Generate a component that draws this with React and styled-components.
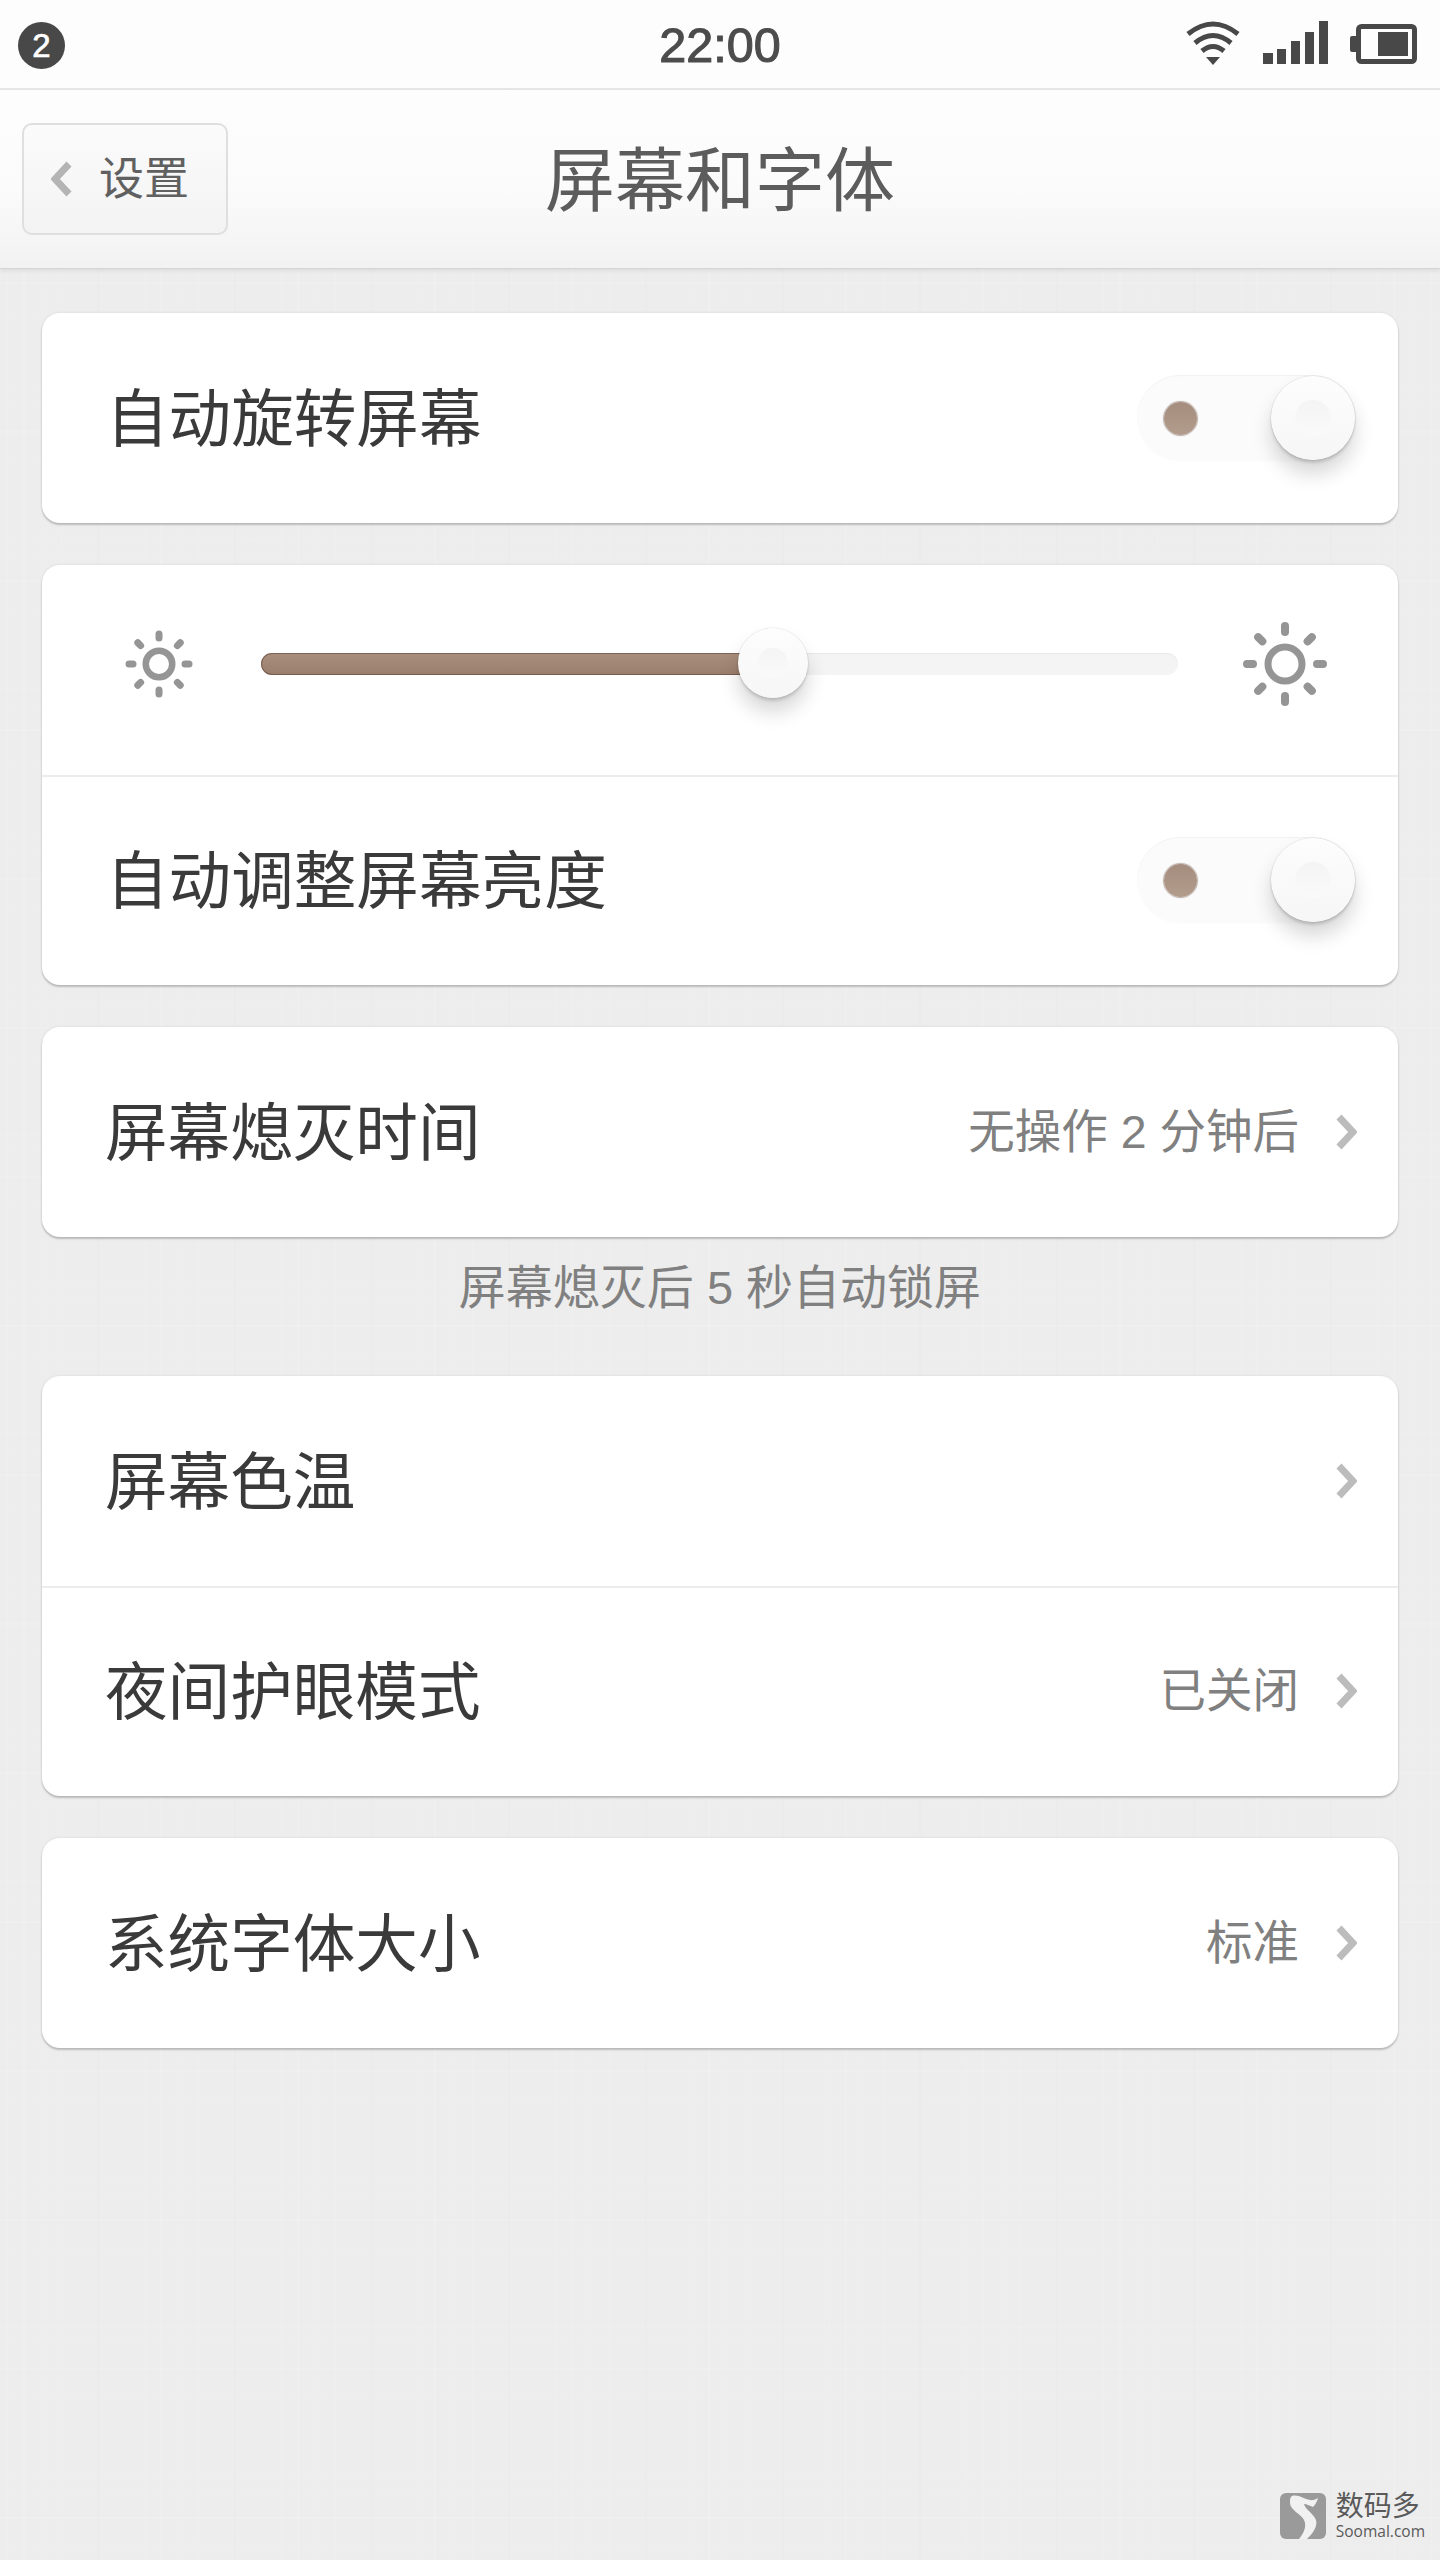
import React from "react";
import styled, { createGlobalStyle } from "styled-components";

const Global = createGlobalStyle`
  html, body { margin: 0; padding: 0; background: #ededed; }
  * { box-sizing: border-box; }
`;

const FONT = `"Liberation Sans", "Noto Sans CJK SC", sans-serif`;

const Page = styled.div`
  position: relative;
  width: 1440px;
  height: 2560px;
  overflow: hidden;
  font-family: ${FONT};
  background-color: #ededed;
  background-image:
    repeating-linear-gradient(90deg, transparent 0 7px, rgba(255,255,255,.1) 7px 8px, transparent 8px 23px, rgba(255,255,255,.12) 23px 25px, transparent 25px 41px, rgba(255,255,255,.08) 41px 42px, transparent 42px 61px, rgba(255,255,255,.1) 61px 62px, transparent 62px 97px, rgba(0,0,0,.006) 97px 99px, transparent 99px 137px),
    repeating-linear-gradient(0deg, transparent 0 11px, rgba(255,255,255,.08) 11px 12px, transparent 12px 41px, rgba(255,255,255,.1) 41px 43px, transparent 43px 67px, rgba(255,255,255,.07) 67px 68px, transparent 68px 83px, rgba(255,255,255,.09) 83px 84px, transparent 84px 149px);
`;

const StatusBar = styled.div`
  display: grid;
  grid-template-columns: 1fr auto 1fr;
  align-items: center;
  height: 90px;
  padding-top: 2px;
  background: #fdfdfd;
  border-bottom: 2px solid #e6e6e6;
`;

const Badge = styled.div`
  display: flex;
  align-items: center;
  justify-content: center;
  width: 47px;
  height: 47px;
  margin-left: 18px;
  border-radius: 50%;
  background: #484848;
  color: #fff;
  font-size: 33px;
  line-height: 1;
  -webkit-text-stroke: 0.7px #fff;
`;

const Clock = styled.div`
  font-size: 48.5px;
  line-height: 1;
  color: #4c4c4c;
  -webkit-text-stroke: 1.1px #4c4c4c;
`;

const StatusIcons = styled.svg`
  justify-self: end;
  display: block;
  margin-top: -2px;
`;

const NavBar = styled.div`
  position: relative;
  display: grid;
  grid-template-columns: 1fr auto 1fr;
  align-items: center;
  height: 179px;
  background: linear-gradient(#fdfdfd 0%, #fbfbfb 55%, #f2f2f2 100%);
  border-bottom: 1px solid #d4d4d4;
  box-shadow: 0 2px 4px rgba(0,0,0,.07);
`;

const BackButton = styled.div`
  display: flex;
  align-items: center;
  justify-self: start;
  width: 206px;
  height: 112px;
  margin-left: 22px;
  padding-left: 27px;
  gap: 26px;
  border: 2px solid #dfdfdf;
  border-radius: 10px;
  background: linear-gradient(#fbfbfb, #f3f3f3);
  color: #606060;
  font-size: 45px;
  line-height: 1;
`;

const Title = styled.div`
  padding-top: 5px;
  font-size: 70px;
  line-height: 1;
  color: #5c5c5c;
`;

const Content = styled.div`
  display: flex;
  flex-direction: column;
  padding: 44px 42px 0;
`;

const Card = styled.div`
  background: #fff;
  border-radius: 18px;
  box-shadow: 0 2px 2px rgba(0,0,0,.2), 0 0 3px rgba(0,0,0,.09);
  margin-bottom: ${p => (p.$tight ? 0 : 42)}px;
`;

const Row = styled.div`
  display: flex;
  align-items: center;
  height: 210px;
  padding-left: ${p => (p.$inset ? 64 : 63)}px;
  padding-right: ${p => (p.$toggle ? 42 : 41)}px;
  box-shadow: ${p => (p.$divided ? "inset 0 2px 0 #ececec" : "none")};
`;

const Label = styled.div`
  flex: 1;
  padding-top: 3px;
  font-size: 62.6px;
  line-height: 1;
  color: #3a3a3a;
`;

const Value = styled.div`
  margin-right: 36px;
  font-size: 46.5px;
  line-height: 1;
  color: #808080;
`;

const Caption = styled.div`
  height: 139px;
  padding-top: 27px;
  text-align: center;
  font-size: 47px;
  line-height: 48px;
  color: #808080;
`;

const Switch = styled.div`
  position: relative;
  width: 219px;
  height: 86px;
  border-radius: 43px;
  background: #fbfbfb;
  box-shadow: inset 0 1px 1px rgba(0,0,0,.04), 0 1px 1px rgba(0,0,0,.01);
`;

const SwitchDot = styled.div`
  position: absolute;
  left: 27px;
  top: 27px;
  width: 33px;
  height: 33px;
  border-radius: 50%;
  background: linear-gradient(#a58d7e, #b29c8c);
  box-shadow: 0 0 1px 1px rgba(110,85,70,.45);
`;

const Knob = styled.div`
  position: absolute;
  display: flex;
  align-items: center;
  justify-content: center;
  width: ${p => p.$size}px;
  height: ${p => p.$size}px;
  border-radius: 50%;
  background: linear-gradient(#fdfdfd, #f6f6f6);
  box-shadow: 0 0 1px rgba(0,0,0,.35), 0 3px 3px rgba(0,0,0,.13), 0 14px 20px rgba(0,0,0,.16);
`;

const SwitchKnob = styled(Knob)`
  right: 1px;
  top: 1px;
`;

const KnobCore = styled.div`
  width: ${p => p.$size}px;
  height: ${p => p.$size}px;
  border-radius: 50%;
  background: linear-gradient(#f4f4f4, #fafafa);
`;

const SliderRow = styled.div`
  display: flex;
  align-items: center;
  height: 210px;
  padding: 0 70px 12px 83px;
`;

const Track = styled.div`
  position: relative;
  width: 917px;
  height: 22px;
  margin: 0 64px 0 68px;
  border-radius: 11px;
  background: #f4f4f4;
  box-shadow: inset 0 1px 1px rgba(0,0,0,.05);
`;

const TrackFill = styled.div`
  height: 100%;
  border-radius: 11px 0 0 11px;
  background: linear-gradient(#a98e7e, #9a7e6d);
  box-shadow: inset 0 0 0 1px rgba(90,65,50,.55);
`;

const SliderKnob = styled(Knob)`
  top: -25px;
  left: 477px;
`;

const Watermark = styled.div`
  position: absolute;
  right: 15px;
  bottom: 21px;
  display: flex;
  align-items: center;
  gap: 10px;
  color: #5a5a5a;
`;

const MarkText = styled.div`
  display: flex;
  flex-direction: column;
`;

const MarkCn = styled.div`
  font-size: 28px;
  line-height: 30px;
`;

const MarkEn = styled.div`
  font-family: "Open Sans", sans-serif;
  font-size: 15.5px;
  line-height: 16px;
  margin-top: 1px;
`;

const Sun = ({ size, ring, stroke, inner, outer, rw, color = "#959595" }) => {
  const c = size / 2;
  const angles = [0, 45, 90, 135, 180, 225, 270, 315];
  return (
    <svg width={size} height={size} viewBox={`0 0 ${size} ${size}`} style={{ flex: "none" }}>
      <circle cx={c} cy={c} r={ring} fill="none" stroke={color} strokeWidth={stroke} />
      {angles.map(a => (
        <line
          key={a}
          x1={c}
          y1={c - inner}
          x2={c}
          y2={c - outer}
          stroke={color}
          strokeWidth={rw}
          strokeLinecap="round"
          transform={`rotate(${a} ${c} ${c})`}
        />
      ))}
    </svg>
  );
};

const ChevronRight = () => (
  <svg width="22" height="36" viewBox="0 0 22 36" style={{ flex: "none" }}>
    <path d="M4 3 L18 18 L4 33" fill="none" stroke="#bcbcbc" strokeWidth="7" strokeLinejoin="miter" />
  </svg>
);

const ChevronLeft = () => (
  <svg width="22" height="36" viewBox="0 0 22 36" style={{ flex: "none" }}>
    <path d="M18 3 L4 18 L18 33" fill="none" stroke="#b4b4b4" strokeWidth="7" strokeLinejoin="miter" />
  </svg>
);

const StatusGlyphs = () => (
  <StatusIcons width="254" height="46" viewBox="1186 23 254 46">
    <g fill="none" stroke="#484848" strokeWidth="5">
      <path d="M1188 36 Q1213 16 1238 36" />
      <path d="M1195 45 Q1213 30 1231 45" />
      <path d="M1202 53 Q1213 44 1224 53" />
    </g>
    <path d="M1206 59 L1220 59 L1213 67 Z" fill="#484848" />
    <g fill="#484848">
      <rect x="1263" y="55" width="10" height="11" />
      <rect x="1277" y="51" width="9" height="15" />
      <rect x="1291" y="43" width="9" height="23" />
      <rect x="1305" y="34" width="9" height="32" />
      <rect x="1319" y="23" width="9" height="43" />
      <path d="M1350 40 q0 -2 2 -2 h4 v16 h-4 q-2 0 -2 -2 Z" />
      <rect x="1378" y="34" width="30" height="24" />
    </g>
    <rect x="1358.5" y="28.5" width="56" height="35" rx="3" fill="none" stroke="#484848" strokeWidth="5" />
  </StatusIcons>
);

const Toggle = () => (
  <Switch>
    <SwitchDot />
    <SwitchKnob $size={84}>
      <KnobCore $size={36} />
    </SwitchKnob>
  </Switch>
);

const Logo = () => (
  <svg width="46" height="46" viewBox="0 0 46 46">
    <rect width="46" height="46" rx="6" fill="#9a9a9a" />
    <path
      d="M12 3 C18 1 24 6 30 7 C33 7.5 36 6.5 38 5 C37 9 35 12 33 14 C30 13 27 11 24 11 C25 16 33 20 36 27 C38 34 32 41 27 46 L19 46 C24 40 27 33 24 27 C21 21 10 17 10 10 C10 7 10 4 12 3 Z"
      fill="#f1f1f1"
    />
  </svg>
);

export default function App() {
  return (
    <Page>
      <Global />
      <StatusBar>
        <Badge>2</Badge>
        <Clock>22:00</Clock>
        <StatusGlyphs />
      </StatusBar>
      <NavBar>
        <BackButton>
          <ChevronLeft />
          <span>设置</span>
        </BackButton>
        <Title>屏幕和字体</Title>
        <span />
      </NavBar>
      <Content>
        <Card>
          <Row $inset $toggle>
            <Label>自动旋转屏幕</Label>
            <Toggle />
          </Row>
        </Card>
        <Card>
          <SliderRow>
            <Sun size={68} ring={13.25} stroke={6.5} inner={26} outer={30} rw={7} />
            <Track>
              <TrackFill style={{ width: `${(490 / 917) * 100}%` }} />
              <SliderKnob $size={70}>
                <KnobCore $size={30} />
              </SliderKnob>
            </Track>
            <Sun size={86} ring={17} stroke={7} inner={32} outer={38} rw={8} />
          </SliderRow>
          <Row $inset $toggle $divided>
            <Label>自动调整屏幕亮度</Label>
            <Toggle />
          </Row>
        </Card>
        <Card $tight>
          <Row>
            <Label>屏幕熄灭时间</Label>
            <Value>无操作 2 分钟后</Value>
            <ChevronRight />
          </Row>
        </Card>
        <Caption>屏幕熄灭后 5 秒自动锁屏</Caption>
        <Card>
          <Row>
            <Label>屏幕色温</Label>
            <ChevronRight />
          </Row>
          <Row $divided>
            <Label>夜间护眼模式</Label>
            <Value>已关闭</Value>
            <ChevronRight />
          </Row>
        </Card>
        <Card>
          <Row>
            <Label>系统字体大小</Label>
            <Value>标准</Value>
            <ChevronRight />
          </Row>
        </Card>
      </Content>
      <Watermark>
        <Logo />
        <MarkText>
          <MarkCn>数码多</MarkCn>
          <MarkEn>Soomal.com</MarkEn>
        </MarkText>
      </Watermark>
    </Page>
  );
}
